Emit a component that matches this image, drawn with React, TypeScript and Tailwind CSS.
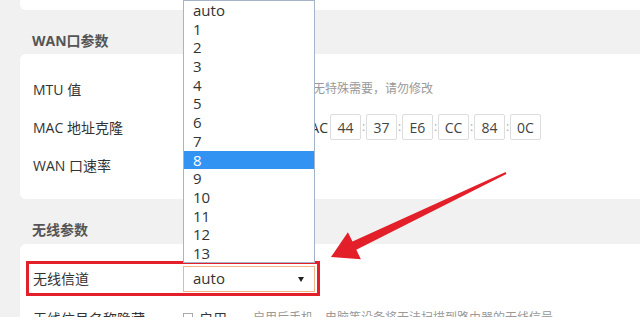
const channels = ["auto", "1", "2", "3", "4", "5", "6", "7", "8", "9", "10", "11", "12", "13"]
const mac = ["44", "37", "E6", "CC", "84", "0C"]

export default function App() {
  return (
    <div className="relative h-[317px] w-[640px] overflow-hidden bg-[#f1f1f1] pl-[20px] font-['Open_Sans','Noto_Sans_CJK_SC',sans-serif] text-[#333]">
      {/* previous card (cut off) */}
      <div className="h-[10px] rounded-bl-[6px] bg-white" />

      <h2 className="flex h-[44px] items-center pl-[12px] pt-[16px] text-[14px] font-bold text-[#555]">
        WAN口参数
      </h2>

      {/* WAN card */}
      <div className="rounded-l-[6px] bg-white pb-[15px] pt-[16px]">
        <div className="flex h-[38px] items-center pl-[13px]">
          <span className="w-[150px] text-[14px]">MTU 值</span>
          <div className="h-[26px] w-[110px] border border-[#ddd]" />
          <span className="ml-[8px] text-[12px] text-[#999]">如无特殊需要，请勿修改</span>
        </div>
        <div className="flex h-[38px] items-center pl-[13px]">
          <span className="w-[150px] text-[14px]">MAC 地址克隆</span>
          <span className="w-[145px] text-right text-[14px]">自定义 MAC</span>
          <div className="ml-[2px] flex items-center">
            {mac.map((m, i) => (
              <div key={m} className="flex items-center">
                {i > 0 && <span className="w-[5px] text-center text-[12px] text-[#aaa]">:</span>}
                <div className="flex h-[26px] w-[31px] items-center justify-center rounded-[2px] border border-[#ddd] text-[14px] text-[#444]">
                  {m}
                </div>
              </div>
            ))}
          </div>
        </div>
        <div className="flex h-[38px] items-center pl-[13px]">
          <span className="w-[150px] text-[14px]">WAN 口速率</span>
          <div className="h-[26px] w-[110px] border border-[#ddd]" />
        </div>
      </div>

      <h2 className="flex h-[45px] items-center pl-[12px] pt-[16px] text-[14px] font-bold text-[#555]">
        无线参数
      </h2>

      {/* wireless card */}
      <div className="h-[80px] rounded-tl-[6px] bg-white pt-[17px]">
        <div className="ml-[6px] flex h-[35px] w-[294px] items-center border-[3px] border-[#e3202a] pl-[4px]">
          <span className="w-[150px] text-[14px]">无线信道</span>
          <div className="flex h-[26px] w-[132px] items-center justify-between border border-[#f3b48a] pl-[9px] pr-[10px]">
            <span className="text-[15px]">auto</span>
            <svg width="6" height="6" viewBox="0 0 6 6" aria-hidden="true">
              <path d="M0 1 L6 1 L3 6 Z" fill="#222" />
            </svg>
          </div>
        </div>
        <div className="mt-[3px] flex h-[38px] items-center pl-[13px]">
          <span className="w-[150px] text-[14px]">无线信号名称隐藏</span>
          <span className="h-[10px] w-[10px] border border-[#aaa]" />
          <span className="ml-[6px] text-[14px]">启用</span>
          <span className="ml-[26px] text-[12px] text-[#999]">启用后手机、电脑等设备将无法扫描到路由器的无线信号</span>
        </div>
      </div>

      {/* open dropdown list */}
      <ul className="absolute left-[183px] top-0 h-[263px] w-[132px] border border-[#a5b4c8] bg-white">
        {channels.map((c) => (
          <li
            key={c}
            className={
              c === "8"
                ? "h-[18.7px] bg-[#3393f3] pl-[9px] text-[15px] leading-[18.7px] text-white"
                : "h-[18.7px] pl-[9px] text-[15px] leading-[18.7px] text-[#333]"
            }
          >
            {c}
          </li>
        ))}
      </ul>

      {/* annotation arrow */}
      <svg className="pointer-events-none absolute left-0 top-0" width="640" height="317" viewBox="0 0 640 317">
        <path
          d="M505.6 172.1 L352.5 241.6 L347.9 232.2 L331 257 L360.9 259.2 L356.3 249.8 L506.4 173.9 Z"
          fill="#e3202a"
        />
      </svg>
    </div>
  )
}
